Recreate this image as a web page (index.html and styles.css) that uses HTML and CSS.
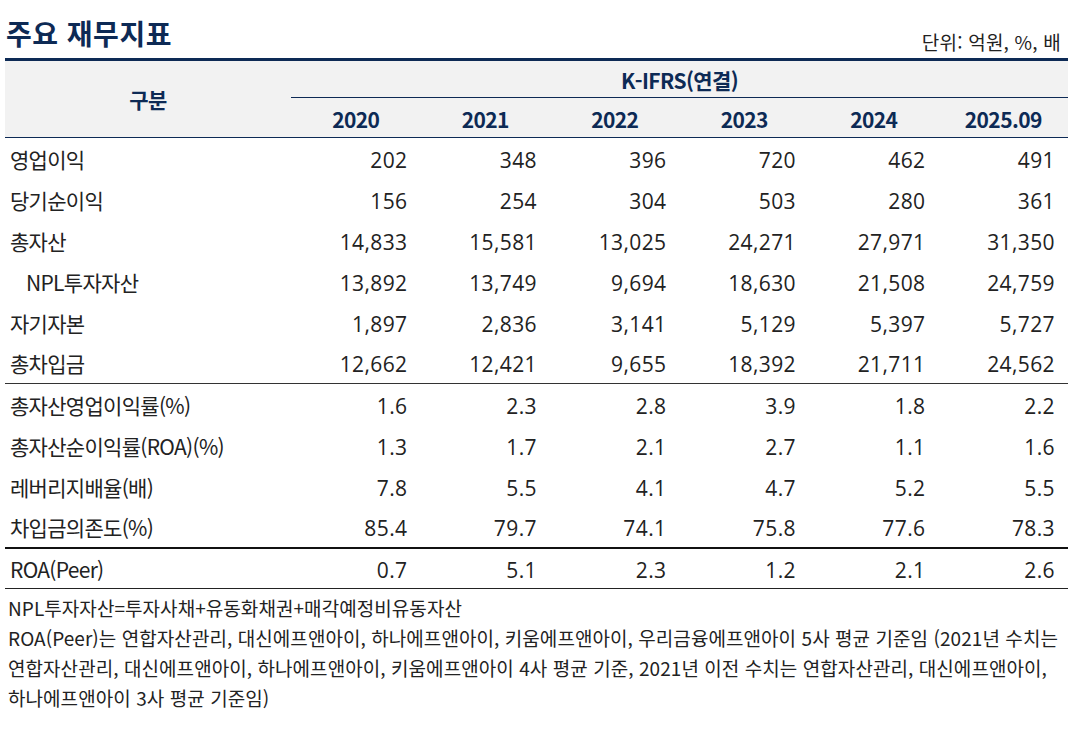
FILE: index.html
```html
<!DOCTYPE html>
<html lang="ko">
<head>
<meta charset="utf-8">
<title>주요 재무지표</title>
<link rel="stylesheet" href="styles.css">
</head>
<body>
<div class="page">
  <div class="head">
    <h1 class="title">주요 재무지표</h1>
    <div class="unit">단위: 억원, %, 배</div>
  </div>
  <table class="fin">
    <colgroup>
      <col class="c-label">
      <col class="c-year"><col class="c-year"><col class="c-year">
      <col class="c-year"><col class="c-year"><col class="c-year">
    </colgroup>
    <thead>
      <tr class="h1">
        <th rowspan="2" class="h-label">구분</th>
        <th colspan="6" class="h-group">K-IFRS(연결)</th>
      </tr>
      <tr class="h2">
        <th>2020</th><th>2021</th><th>2022</th><th>2023</th><th>2024</th><th>2025.09</th>
      </tr>
    </thead>
    <tbody>
      <tr><td class="lbl">영업이익</td><td>202</td><td>348</td><td>396</td><td>720</td><td>462</td><td>491</td></tr>
      <tr><td class="lbl">당기순이익</td><td>156</td><td>254</td><td>304</td><td>503</td><td>280</td><td>361</td></tr>
      <tr><td class="lbl">총자산</td><td>14,833</td><td>15,581</td><td>13,025</td><td>24,271</td><td>27,971</td><td>31,350</td></tr>
      <tr><td class="lbl sub">NPL투자자산</td><td>13,892</td><td>13,749</td><td>9,694</td><td>18,630</td><td>21,508</td><td>24,759</td></tr>
      <tr><td class="lbl">자기자본</td><td>1,897</td><td>2,836</td><td>3,141</td><td>5,129</td><td>5,397</td><td>5,727</td></tr>
      <tr class="sep"><td class="lbl">총차입금</td><td>12,662</td><td>12,421</td><td>9,655</td><td>18,392</td><td>21,711</td><td>24,562</td></tr>
      <tr><td class="lbl">총자산영업이익률(%)</td><td>1.6</td><td>2.3</td><td>2.8</td><td>3.9</td><td>1.8</td><td>2.2</td></tr>
      <tr><td class="lbl">총자산순이익률(ROA)(%)</td><td>1.3</td><td>1.7</td><td>2.1</td><td>2.7</td><td>1.1</td><td>1.6</td></tr>
      <tr><td class="lbl">레버리지배율(배)</td><td>7.8</td><td>5.5</td><td>4.1</td><td>4.7</td><td>5.2</td><td>5.5</td></tr>
      <tr class="sep-thick"><td class="lbl">차입금의존도(%)</td><td>85.4</td><td>79.7</td><td>74.1</td><td>75.8</td><td>77.6</td><td>78.3</td></tr>
      <tr class="last"><td class="lbl">ROA(Peer)</td><td>0.7</td><td>5.1</td><td>2.3</td><td>1.2</td><td>2.1</td><td>2.6</td></tr>
    </tbody>
  </table>
  <div class="notes">
    <p>NPL투자자산=투자사채+유동화채권+매각예정비유동자산</p>
    <p>ROA(Peer)는 연합자산관리, 대신에프앤아이, 하나에프앤아이, 키움에프앤아이, 우리금융에프앤아이 5사 평균 기준임 (2021년 수치는<br>연합자산관리, 대신에프앤아이, 하나에프앤아이, 키움에프앤아이 4사 평균 기준, 2021년 이전 수치는 연합자산관리, 대신에프앤아이,<br>하나에프앤아이 3사 평균 기준임)</p>
  </div>
</div>
</body>
</html>
```

FILE: styles.css
```css
html, body {
  margin: 0;
  padding: 0;
  background: #ffffff;
}

body {
  font-family: "Noto Sans CJK KR", "Noto Sans", sans-serif;
  color: #222222;
}

.page {
  width: 1063px;
  padding-left: 5px;
}

.head {
  height: 58px;
  display: flex;
  justify-content: space-between;
  align-items: flex-end;
}

.title {
  margin: 0;
  padding: 0 0 8px 1px;
  font-size: 28px;
  line-height: 34px;
  font-weight: 700;
  letter-spacing: 0.5px;
  color: #0d2a55;
}

.unit {
  padding: 0 7px 4px 0;
  font-size: 19px;
  line-height: 24px;
  letter-spacing: 0.2px;
  color: #222222;
}

.fin {
  width: 1063px;
  border-collapse: collapse;
  table-layout: fixed;
  border-top: 3px solid #0d2a55;
}

.c-label { width: 286px; }
.c-year { width: 129.5px; }

thead th {
  background: #f2f2f2;
  color: #0d2a55;
  font-weight: 700;
  font-size: 21px;
  padding: 0;
  text-align: center;
  letter-spacing: -0.6px;
}

.h1 { height: 38px; }
.h2 { height: 40px; }

.h-group {
  border-bottom: 1px solid #0d2a55;
  padding-top: 1px;
}

.h2 th {
  border-bottom: 1px solid #0d2a55;
  padding-top: 3px;
}

.h-label {
  border-bottom: 1px solid #0d2a55;
}

tbody tr { height: 41px; }

tbody td {
  padding: 3px 13px 0 0;
  text-align: right;
  font-family: "Open Sans", "Noto Sans CJK KR", sans-serif;
  font-size: 21px;
  letter-spacing: 0.4px;
  color: #222222;
}

tbody td.lbl {
  text-align: left;
  padding: 1px 0 0 5px;
  font-family: "Noto Sans CJK KR", sans-serif;
  font-size: 21px;
  letter-spacing: -0.7px;
}

tbody td.sub {
  padding-left: 21px;
}

.sep td { border-bottom: 1px solid #333333; }
.sep-thick td { border-bottom: 2px solid #111111; }
.last td { border-bottom: 1px solid #222222; }

.notes {
  padding: 4px 0 0 3px;
}

.notes p {
  margin: 0;
  font-size: 19px;
  line-height: 30px;
  letter-spacing: 0.06px;
  white-space: nowrap;
  color: #222222;
}
```
